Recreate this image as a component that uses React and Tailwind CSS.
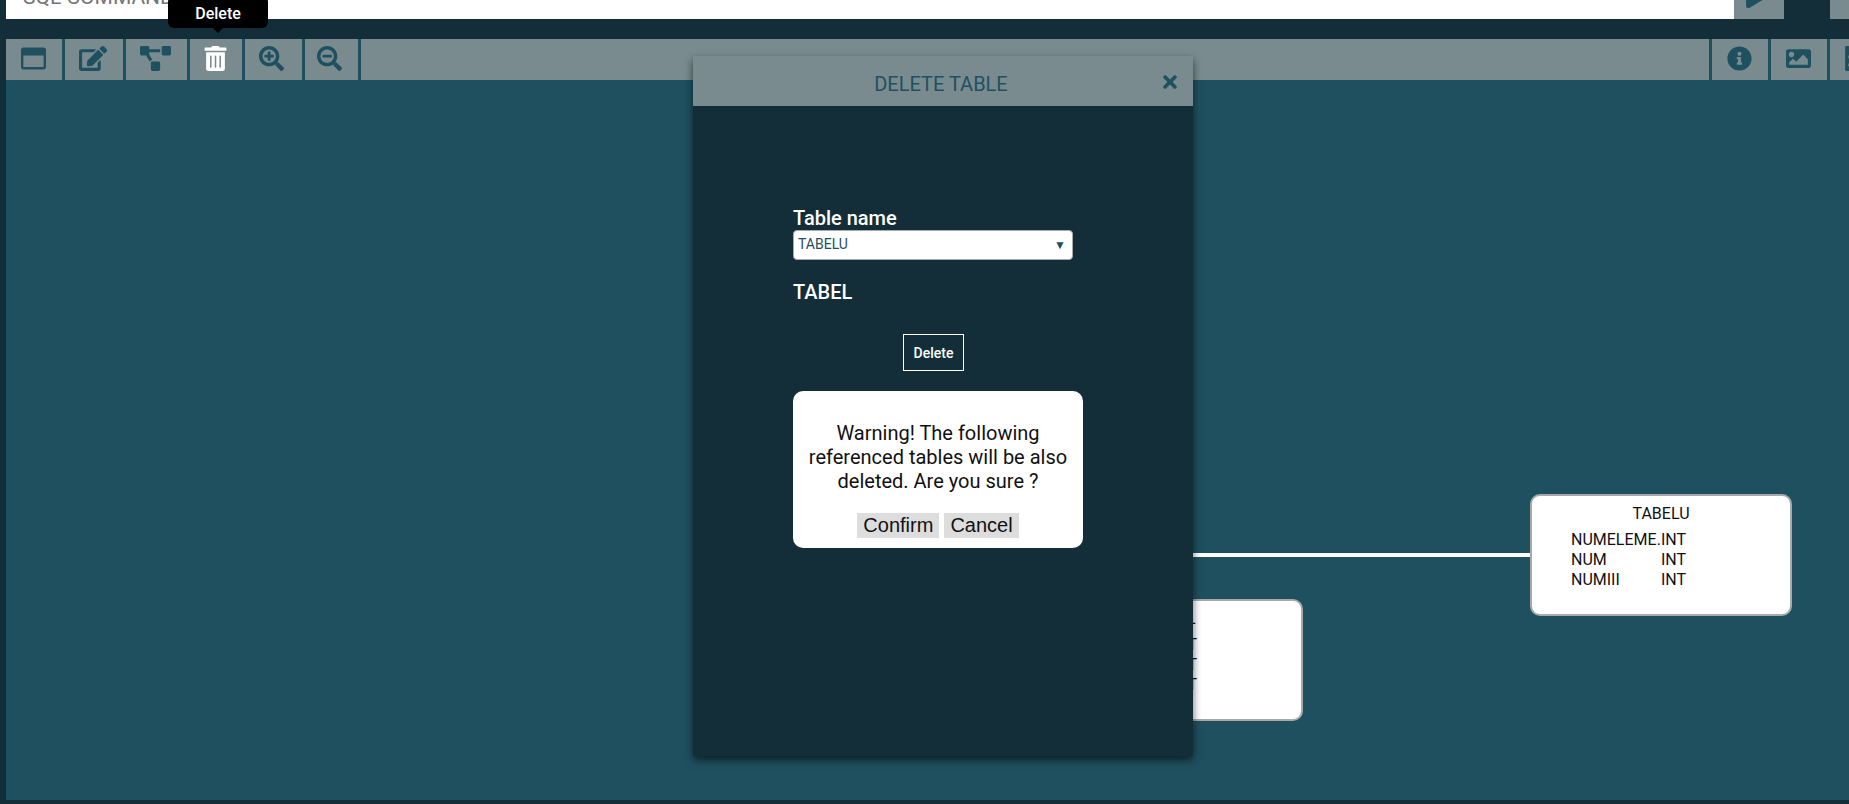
import {
  FaRegWindowMaximize,
  FaEdit,
  FaProjectDiagram,
  FaTrashAlt,
  FaSearchPlus,
  FaSearchMinus,
  FaInfoCircle,
  FaImage,
  FaFileImage,
  FaPlay,
  FaTimes,
} from "react-icons/fa";

function ToolButton({ icon: Icon, label, iconClass = "", className = "", children }) {
  return (
    <button
      type="button"
      aria-label={label}
      className={`relative flex h-full shrink-0 items-center justify-center bg-[#798b8f] pb-0.5 ${className}`}
    >
      <Icon size={25} className={iconClass} />
      {children}
    </button>
  );
}

function Tooltip({ text }) {
  return (
    <span className="absolute bottom-full left-1/2 z-10 mb-[11px] ml-0.5 w-[100px] -translate-x-1/2 rounded-md bg-black pb-0.5 pt-1.5 text-center text-base font-medium text-white">
      {text}
      <span className="absolute left-1/2 top-full -translate-x-1/2 border-5 border-transparent border-t-black" />
    </span>
  );
}

function TableNode({ name, columns, className }) {
  return (
    <div className={`absolute h-[122px] w-[262px] rounded-[10px] border-2 border-[#a9a9a9] bg-white pt-2 text-base leading-5 text-[#111111] ${className}`}>
      <h3 className="text-center">{name}</h3>
      <table className="ml-[39px] mt-1.5 table-fixed border-collapse">
        <tbody>
          {columns.map((c) => (
            <tr key={c}>
              <td className="w-[90px] p-0">{c}</td>
              <td className="p-0">INT</td>
            </tr>
          ))}
        </tbody>
      </table>
    </div>
  );
}

function DeleteDialog() {
  return (
    <div className="absolute inset-0 flex items-start justify-center overflow-hidden pl-[37px] pt-14">
      <section
        role="dialog"
        aria-labelledby="dialog-title"
        className="w-[500px] bg-[#132e39] pb-[208px] shadow-[0_4px_8px_0_rgba(0,0,0,0.6)]"
      >
        <header className="relative flex h-[50px] items-center justify-center bg-[#798b8f] pt-1.5 pr-1 text-[#1f5060]">
          <h2 id="dialog-title" className="text-xl leading-6">DELETE TABLE</h2>
          <button type="button" aria-label="Close" className="absolute right-4 top-4">
            <FaTimes size={20} className="w-[14px]" />
          </button>
        </header>
        <form className="mx-[100px] flex flex-col pt-[100px] text-xl leading-6 text-white">
          <label htmlFor="table-name" className="font-medium">Table name</label>
          <div className="relative w-[280px] text-sm text-[#1f5060]">
            <select
              id="table-name"
              defaultValue="TABELU"
              className="block h-[30px] w-full appearance-none rounded border border-[#aaaaaa] bg-white px-1 pb-0.5"
            >
              <option>TABELU</option>
              <option>TABEL</option>
            </select>
            <span aria-hidden="true" className="pointer-events-none absolute right-[7px] top-[7px] text-xs leading-4">▼</span>
          </div>
          <p className="mt-5 font-medium">TABEL</p>
          <button
            type="button"
            className="ml-[110px] mt-[30px] h-[37px] w-[61px] border border-white text-sm font-medium"
          >
            Delete
          </button>
          <div className="mt-5 w-[290px] rounded-[10px] bg-white px-3 pb-[10px] pt-[30px] text-center text-[#111111]">
            <p>Warning! The following referenced tables will be also deleted. Are you sure ?</p>
            <div className="mt-5 flex justify-center gap-[5px] font-['Liberation_Sans',sans-serif]">
              <button type="button" className="h-[25px] bg-[#dddddd] px-1.5 pb-0.5">Confirm</button>
              <button type="button" className="h-[25px] bg-[#dddddd] px-1.5 pb-0.5">Cancel</button>
            </div>
          </div>
        </form>
      </section>
    </div>
  );
}

export default function App() {
  return (
    <div className="relative flex h-screen flex-col overflow-hidden bg-[#132e39] pb-1 pl-1.5 font-[Roboto,sans-serif] text-[#1f5060]">
      <div className="flex h-[19px] shrink-0 items-end overflow-hidden">
        <input
          aria-label="SQL command"
          placeholder="SQL COMMAND"
          className="h-11 min-w-0 flex-1 bg-white px-[17px] text-[21px] text-black placeholder:text-[#757575]"
        />
        <button type="button" aria-label="Run" className="flex h-11 w-[50px] items-center justify-center bg-[#798b8f] pb-1 pr-1">
          <FaPlay size={25} className="w-[22px]" />
        </button>
        <button type="button" aria-label="Clear" className="ml-[46px] h-11 w-[19px] bg-[#798b8f]" />
      </div>

      <nav className="mt-5 flex h-[41px] shrink-0 gap-[3px] bg-[#1f5060]">
        <ToolButton icon={FaRegWindowMaximize} label="Create table" className="w-14 pr-0.5" />
        <ToolButton icon={FaEdit} iconClass="w-7" label="Edit table" className="w-[58px] pr-0.5" />
        <ToolButton icon={FaProjectDiagram} iconClass="w-[31px]" label="Relations" className="w-[61px] pr-0.5" />
        <ToolButton icon={FaTrashAlt} label="Delete" className="w-[52px] pr-0.5 text-white">
          <Tooltip text="Delete" />
        </ToolButton>
        <ToolButton icon={FaSearchPlus} label="Zoom in" className="w-[57px] pr-1" />
        <ToolButton icon={FaSearchMinus} label="Zoom out" className="w-[53px] pr-1" />
        <div className="flex-1 bg-[#798b8f]" />
        <ToolButton icon={FaInfoCircle} label="Info" className="w-14 pr-0.5" />
        <ToolButton icon={FaImage} label="Save image" className="w-14 pr-0.5" />
        <div className="w-[19px] overflow-hidden">
          <ToolButton icon={FaFileImage} label="Export file" className="w-[50px] pr-0.5" />
        </div>
      </nav>

      <main className="relative flex-1 overflow-hidden bg-[#1f5060]">
        <div className="absolute left-[1000px] top-[473px] h-1 w-[524px] bg-white" />
        <TableNode name="TABELU" columns={["NUMELEME.", "NUM", "NUMIII"]} className="left-[1524px] top-[414px]" />
        <TableNode name="TABEL" columns={["NUM", "NUME", "ID"]} className="left-[1035px] top-[519px]" />
      </main>

      <DeleteDialog />
    </div>
  );
}
